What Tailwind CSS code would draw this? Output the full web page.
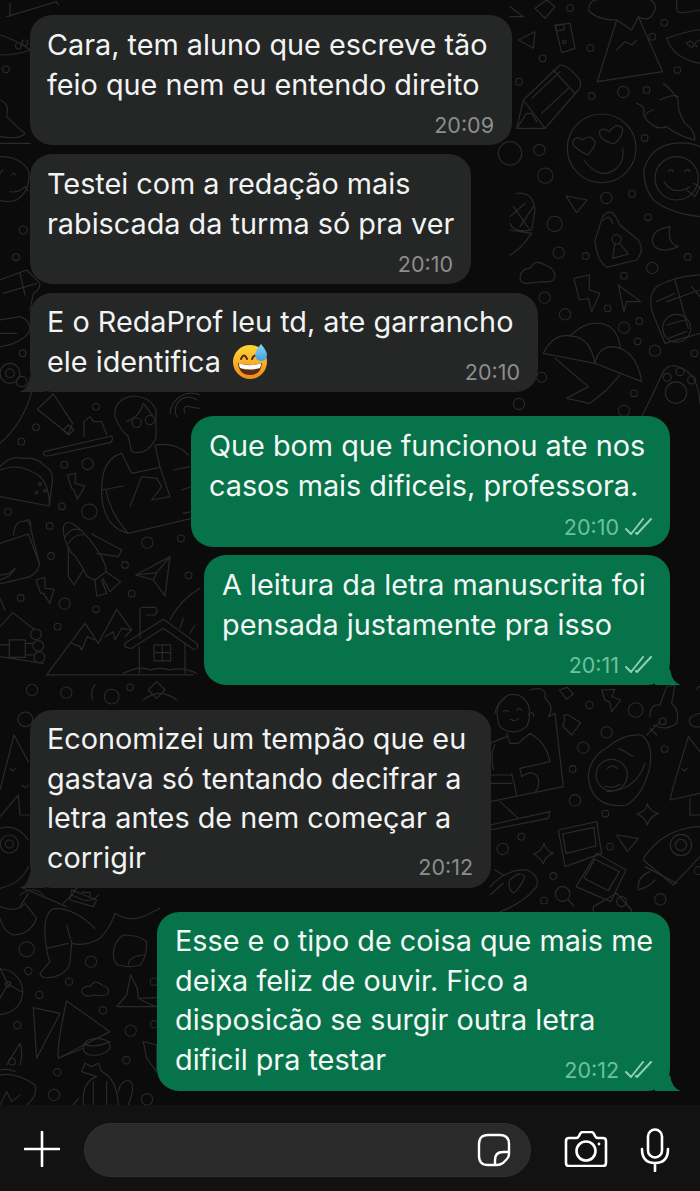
<!DOCTYPE html>
<html lang="en">
<head>
    <meta charset="UTF-8">
    <meta name="viewport" content="width=device-width, initial-scale=1.0">
    <title>Conversa</title>
    <script src="https://cdn.jsdelivr.net/npm/@tailwindcss/browser@4"></script>
</head>
<body class="bg-[#0b0b0b]">

<div class="relative w-[700px] h-[1191px] overflow-hidden bg-[#0b0b0b] font-['Inter',sans-serif] flex flex-col">

    <!-- doodle wallpaper, paths are in 3x crop coords -->
    <svg class="absolute inset-0" width="700" height="1191" viewBox="0 0 700 1191" fill="none" stroke="#2a2a2a" stroke-width="3.6" stroke-linecap="round" stroke-linejoin="round">
        <!-- middle left: person, taco, rocket, house -->
        <g transform="translate(0 380) scale(.3333)">
            <path d="M0 190Q70 130 95 35"/>
            <path d="M112 88L160 42L218 130L205 162L190 150Z"/><path d="M190 150L205 135L222 150L205 165Z"/>
            <path d="M132 215L335 168Q342 180 330 188L145 228Q125 228 132 215Z"/><path d="M252 170V125L270 110L280 125L305 125L320 165"/>
            <path d="M345 110Q340 60 395 48Q450 48 468 90L468 175Q440 230 395 215L385 170Q360 150 345 110Z"/><path d="M380 125Q420 110 430 70L460 110"/><circle cx="410" cy="128" r="14"/><circle cx="450" cy="120" r="14"/>
            <path d="M365 220L395 280L480 262L465 195Q530 185 565 225"/><path d="M365 220Q305 235 305 330Q305 440 385 460L575 415"/><path d="M305 330L370 318"/><path d="M390 380L425 290L470 295L485 320L455 360L510 350L480 262"/><path d="M318 330Q330 400 385 460"/><path d="M520 270L570 260M545 330L575 320M550 400L575 395"/>
            <path d="M510 100a65 65 0 0 1 90 -55M530 110a40 40 0 0 1 60 -50"/><path d="M555 100q-10 -25 15 -20q20 5 30 5"/>
            <path d="M0 260Q30 225 70 235Q110 230 130 255Q165 270 155 320L148 378L0 350"/><path d="M0 270Q60 245 120 290Q150 320 148 378"/>
            <circle cx="120" cy="312" r="4"/><circle cx="135" cy="332" r="4"/><circle cx="110" cy="338" r="4"/>
            <path d="M202 285L228 280L225 310L255 318L232 358L222 330L215 325Z"/>
            <path d="M108 600L135 592L135 625L162 628L150 670L130 640L122 640Z"/>
            <path d="M0 490L85 462L118 550Q118 575 90 590L0 612"/><path d="M80 420Q95 415 92 445L118 550"/><path d="M40 465Q45 420 70 425Q85 415 92 440"/><path d="M0 600Q35 590 45 565Q30 585 0 585"/>
            <path d="M190 450Q190 420 215 430Q250 450 285 500Q320 550 318 575L285 600L262 590Q225 520 215 520Q190 480 190 450Z"/><path d="M195 470Q215 440 240 450M205 490Q225 460 250 465"/><path d="M275 462L365 510L355 530L290 520"/><path d="M205 500L205 590L222 615L250 570"/><path d="M318 575L362 605L330 635L308 595M285 600L290 648L320 640L305 600"/>
            <path d="M408 585L510 530L495 648L460 600Z"/><path d="M408 585L470 578L510 530M470 578L460 600"/>
            <path d="M140 885L255 730L295 790L350 688L395 750L375 770"/><path d="M215 790L240 800L245 810L262 770L285 780"/><path d="M315 770L340 755L345 780L365 745L395 750"/>
            <path d="M140 885H580"/><path d="M375 790L490 718L590 790Q600 808 580 808L490 745L395 805Q370 805 375 790Z"/><path d="M420 775V690Q420 680 435 682H465Q478 690 465 705H440M418 800V880M555 790V880"/><rect x="462" y="795" width="50" height="48"/><path d="M487 795V843M462 818H512"/>
            <path d="M370 880Q420 855 450 870Q480 860 510 870Q550 860 590 880"/>
            <path d="M510 720Q540 660 600 625M540 745L550 715M570 760L585 735"/>
            <path d="M0 740L38 698L105 750M0 830L130 850"/><rect x="28" y="780" width="48" height="52"/><circle cx="108" cy="763" r="16"/><circle cx="115" cy="798" r="16"/><circle cx="118" cy="832" r="16"/><path d="M0 795H28M76 790H100M76 825H100"/>
            <path d="M0 655L15 690"/>
            <g stroke-width="3.2"><circle cx="108" cy="142" r="10"/><circle cx="64" cy="185" r="10"/><circle cx="288" cy="80" r="10"/><circle cx="193" cy="254" r="10"/><circle cx="263" cy="252" r="17"/><circle cx="186" cy="379" r="10"/><circle cx="268" cy="395" r="23"/><circle cx="24" cy="395" r="10"/><circle cx="149" cy="438" r="10"/><circle cx="442" cy="488" r="17"/><circle cx="543" cy="475" r="10"/><circle cx="153" cy="528" r="10"/><circle cx="375" cy="555" r="10"/><circle cx="566" cy="586" r="10"/><circle cx="395" cy="641" r="10"/><circle cx="62" cy="654" r="10"/><circle cx="194" cy="671" r="17"/><circle cx="288" cy="688" r="10"/><circle cx="173" cy="740" r="10"/><circle cx="96" cy="930" r="17"/><circle cx="199" cy="938" r="17"/><circle cx="335" cy="950" r="22"/><circle cx="390" cy="922" r="10"/></g>
            <path d="M445 930l25 -25l25 25l-25 25zM430 960Q480 920 530 960"/><path d="M278 960Q270 930 285 915"/>
        </g>

        <!-- left column between the bubbles -->
        <g transform="translate(0 680) scale(.3333)">
            <path d="M0 330L42 165L85 245"/><path d="M0 410L55 345L60 405H88"/><path d="M30 265l8 8l8 -8M65 315l10 8l10 -8"/>
            <path d="M0 445Q50 430 85 480M85 560Q65 610 0 625"/><circle cx="28" cy="492" r="27"/><circle cx="28" cy="492" r="12"/>
            <circle cx="76" cy="118" r="22"/><path d="M70 625L200 680M60 680L85 640"/><path d="M215 630L290 660L280 680L210 660Z"/>
        </g>

        <!-- top right: pencil, smileys, lock, umbrellas -->
        <g transform="translate(510 0) scale(.3333)">
            <path d="M20 385L40 300L150 195Q175 195 210 240Q215 260 205 270L105 385Z"/><path d="M40 300L105 385M130 210L195 280M65 295L150 215M95 340L175 265"/><path d="M20 385L50 340L65 340L80 365"/>
            <circle cx="275" cy="445" r="103"/><path d="M222 480Q270 545 320 505Q345 480 338 445"/>
            <path d="M232 465Q185 440 188 425Q200 405 218 420Q240 400 255 425Q258 440 232 465Z"/><path d="M312 432Q268 420 268 395Q280 380 298 395Q320 365 338 385Q340 410 312 432Z"/>
            <path d="M570 650Q480 640 430 600Q400 560 402 510Q420 440 490 430Q540 425 570 440"/><circle cx="500" cy="535" r="65"/><path d="M475 515q8 -12 15 0M525 515q8 -12 15 0M462 545Q490 590 540 560"/><path d="M530 570l25 20l15 -30l-20 -10"/>
            <path d="M262 245L320 60L365 90L385 50L458 215Z"/><path d="M320 60Q260 60 235 30Q240 0 260 0M385 50Q420 70 435 30Q440 10 420 0"/><path d="M320 150L345 125L365 135L380 120"/>
            <path d="M470 115Q560 85 570 90M470 115Q490 175 570 190"/><path d="M530 130q15 -15 22 5q-5 15 -22 -5M570 120q-20 5 -10 20"/>
            <path d="M380 310Q410 320 400 345Q430 395 470 380Q510 410 555 420Q555 390 525 370Q500 330 505 300Q490 275 460 250"/><path d="M450 300Q490 280 505 290M430 330q-20 5 -25 20"/>
            <path d="M0 50L40 50L0 20M75 25L110 0L135 20L105 55Z"/><path d="M25 120L75 95L70 145Z"/>
            <path d="M135 75L180 70L195 145L155 158Z"/><rect x="138" y="75" width="24" height="16" transform="rotate(-10 150 83)"/><circle cx="163" cy="125" r="5"/>
            <path d="M500 30Q500 45 570 30M500 0V30"/>
            <path d="M168 588L232 600L200 638Z"/>
            <path d="M255 722L278 650Q300 620 320 655L330 675L385 720Q405 750 380 780L290 802Q260 780 255 722Z"/><path d="M280 660Q300 640 308 672"/><circle cx="320" cy="718" r="14"/><path d="M315 730L308 775L355 762L328 730"/>
            <path d="M480 680Q420 690 428 730Q445 765 505 740Q470 730 480 680Z"/>
            <path d="M0 690L65 700Q30 750 0 765M20 580Q70 575 75 630L65 690Q10 700 0 670M10 620L60 690M0 650L45 610M30 680L70 620"/>
            <path d="M30 830Q35 805 60 805Q75 775 105 795Q135 805 135 830Q130 850 100 845L50 850Q30 850 30 830Z"/>
            <path d="M192 835L238 825L238 870L270 880L245 935L235 895L208 900Z"/>
            <path d="M325 855L392 905L350 905L342 935Z"/>
            <path d="M570 825Q490 830 440 860Q410 890 430 945L465 1030L570 1000"/><path d="M495 840L535 985M440 905L495 880M470 905L570 870M545 860L570 890"/><circle cx="500" cy="985" r="42"/><path d="M470 975L525 960M475 1015L530 995"/>
            <path d="M100 1060Q130 1000 180 1008Q240 1010 255 1090L100 1060Z"/><path d="M180 1008Q240 950 300 980Q330 1005 330 1045"/><path d="M255 1090Q265 1040 310 1040Q380 1050 395 1145L255 1090Z"/><path d="M135 1075L235 1160L170 1195L240 1210L290 1170L330 1125"/>
            <path d="M390 1260Q430 1180 460 1115Q480 1085 515 1105Q565 1125 570 1210"/><circle cx="498" cy="1178" r="32"/><circle cx="472" cy="1132" r="12"/><circle cx="510" cy="1115" r="12"/><circle cx="545" cy="1140" r="12"/>
            <circle cx="0" cy="460" r="35"/>
            <g stroke-width="3.2"><circle cx="180" cy="24" r="10"/><circle cx="463" cy="68" r="10"/><circle cx="427" cy="110" r="10"/><circle cx="241" cy="144" r="10"/><circle cx="98" cy="175" r="10"/><circle cx="502" cy="210" r="10"/><circle cx="27" cy="245" r="10"/><circle cx="245" cy="288" r="10"/><circle cx="340" cy="276" r="17"/><circle cx="410" cy="270" r="10"/><circle cx="404" cy="414" r="10"/><circle cx="88" cy="450" r="17"/><circle cx="106" cy="527" r="23"/><circle cx="289" cy="594" r="17"/><circle cx="366" cy="581" r="10"/><circle cx="134" cy="672" r="23"/><circle cx="414" cy="652" r="10"/><circle cx="146" cy="758" r="17"/><circle cx="227" cy="768" r="10"/><circle cx="533" cy="771" r="10"/><circle cx="427" cy="804" r="17"/><circle cx="342" cy="827" r="10"/><circle cx="104" cy="893" r="17"/><circle cx="293" cy="925" r="10"/><circle cx="165" cy="943" r="17"/><circle cx="388" cy="963" r="10"/><circle cx="342" cy="983" r="17"/><circle cx="383" cy="1024" r="10"/><circle cx="435" cy="1052" r="17"/><circle cx="553" cy="1060" r="10"/><circle cx="95" cy="1132" r="15"/><circle cx="372" cy="1180" r="10"/><circle cx="27" cy="1212" r="17"/><circle cx="342" cy="1232" r="17"/></g>
        </g>

        <!-- right middle: laptop person, avocado, tree, photos, rocket -->
        <g transform="translate(490 680) scale(.3333)">
            <path d="M25 125Q10 70 55 45Q95 35 115 75Q125 110 110 140Q80 165 45 150Q25 140 25 125Z"/><path d="M15 100Q20 70 45 55M115 105a8 8 0 1 1 15 5"/><path d="M40 95q8 -8 15 0M80 90q8 -8 15 0M60 118q15 8 25 -2"/>
            <path d="M50 160L60 190L85 190L120 160Q170 190 180 245L90 265L95 290M0 190L50 170M10 270Q0 220 15 195"/>
            <path d="M120 30Q170 15 165 55Q195 80 175 110L195 100L220 320L0 365"/><path d="M65 280L80 345M95 290Q130 265 145 295Q150 320 135 338"/><path d="M0 285H65M0 310H65"/>
            <path d="M30 365L85 415M0 435L180 395L175 415L0 450"/>
            <path d="M208 30L232 22L250 42L230 58Z"/><path d="M225 118Q215 100 235 105L272 128L245 165L218 138L225 118Z"/>
            <path d="M335 30L375 28L365 50L392 60L365 95L358 65L345 60Z"/>
            <path d="M295 285Q300 230 355 200Q400 160 455 165Q490 190 480 260Q460 345 410 375Q340 385 310 340Q295 315 295 285Z"/><path d="M350 335Q440 330 465 250M385 205l20 10M405 215l25 15"/><circle cx="365" cy="285" r="47"/><path d="M352 265q15 -15 30 0M345 318q25 10 45 -5"/>
            <path d="M470 165L510 125M480 145L500 165"/><circle cx="518" cy="124" r="10"/><path d="M480 110Q480 70 510 75L530 20L555 15L545 70Q570 90 560 130Q530 155 490 135"/>
            <path d="M550 320L595 170L630 215M550 320L540 360L630 340M575 265l8 8l8 -8"/><path d="M600 355V405H630"/><path d="M630 100Q590 110 600 130Q610 145 630 140"/>
            <path d="M440 402Q470 395 472 370Q478 395 505 400Q478 410 472 435Q465 410 440 402Z"/>
            <path d="M380 465L445 475L412 515Z"/><path d="M130 522Q155 515 162 490Q170 515 190 520Q165 528 160 552Q150 530 130 522Z"/>
            <path d="M205 450L320 425L335 520L225 560Z"/><path d="M218 462L312 442L318 498L228 520Z"/>
            <path d="M320 520L408 570L362 665L258 620Z"/><path d="M315 538L388 575L355 632L282 595Z"/>
            <path d="M310 720V680L380 640L425 690V720"/><circle cx="395" cy="665" r="15"/>
            <path d="M630 440Q570 440 510 480Q465 520 460 540L550 615L630 530"/><circle cx="573" cy="495" r="32"/><circle cx="573" cy="495" r="17"/><path d="M465 560L560 610M480 575Q440 590 445 630Q480 620 495 600"/>
            <path d="M0 620Q50 565 110 570Q150 585 140 620Q100 670 30 695M0 645L40 610M60 600Q90 570 105 590Q90 625 70 640Q50 620 60 600M15 570L40 585"/>
            <circle cx="218" cy="642" r="22"/><path d="M235 660L252 678"/>
            <g stroke-width="3.2"><circle cx="298" cy="75" r="11"/><circle cx="437" cy="90" r="22"/><circle cx="350" cy="157" r="17"/><circle cx="280" cy="203" r="17"/><circle cx="248" cy="267" r="10"/><circle cx="524" cy="207" r="10"/><circle cx="255" cy="361" r="17"/><circle cx="346" cy="401" r="10"/><circle cx="94" cy="470" r="10"/><circle cx="38" cy="507" r="17"/><circle cx="360" cy="500" r="10"/><circle cx="190" cy="588" r="10"/><circle cx="162" cy="662" r="10"/><circle cx="511" cy="658" r="17"/><circle cx="625" cy="572" r="12"/></g>
            <path d="M620 28a12 12 0 1 1 15 15"/>
        </g>

        <!-- bottom left: legs, ball, nacho, cactus, lamp -->
        <g transform="translate(0 885) scale(.3333)">
            <path d="M0 65Q50 85 75 55L110 100Q90 150 40 150Q10 140 0 100M75 55L110 100"/>
            <path d="M60 30Q100 0 130 30M190 55L215 30M285 130Q225 70 165 70Q130 80 135 150Q140 210 150 230L120 265Q125 285 165 275Q200 265 210 235L215 170"/><path d="M215 175Q260 185 300 160Q330 130 345 85Q390 115 440 90L480 70"/><path d="M140 190L205 175M200 120L215 175"/>
            <path d="M220 20L240 0M295 30Q280 50 250 45L215 30L230 10M245 22h25v12"/>
            <path d="M340 210Q340 170 370 150Q420 150 440 170Q440 220 420 240Q385 250 355 240Q340 230 340 210Z"/><path d="M385 240Q385 215 430 210"/>
            <path d="M245 320Q250 300 270 305Q285 280 305 300Q330 305 325 325Q315 335 285 330Q255 340 245 320Z"/>
            <path d="M350 365L380 330L392 270L412 310L415 340L470 338M415 340Q450 360 470 365L350 365"/>
            <circle cx="0" cy="320" r="68"/><circle cx="24" cy="298" r="8"/><path d="M24 298L0 250M24 298L65 320M24 298L0 340"/>
            <path d="M100 368L180 385L110 520Z"/><path d="M200 348L330 440L175 520Q170 480 200 348Z"/><path d="M250 490Q250 460 295 460Q335 465 330 490Q310 515 270 510Q250 505 250 490Z"/><path d="M250 478Q290 490 330 470M175 520L250 490"/>
            <path d="M20 540Q45 500 60 475Q70 510 60 540"/><circle cx="36" cy="530" r="10"/><path d="M0 555Q25 550 45 560M0 570Q50 560 105 600Q115 630 80 660M0 660L20 620L35 650L60 630"/>
            <path d="M250 660Q245 590 290 575L245 560L255 535L275 545L295 535L305 560Q350 580 355 660M280 590V660M320 590V660"/>
            <path d="M355 620Q360 590 385 585Q405 595 395 630L385 660M220 660L235 640"/>
            <g stroke-width="3.2"><circle cx="80" cy="193" r="23"/><circle cx="273" cy="230" r="17"/><circle cx="85" cy="258" r="11"/><circle cx="207" cy="290" r="11"/><circle cx="118" cy="330" r="11"/><circle cx="462" cy="290" r="11"/><circle cx="309" cy="376" r="11"/><circle cx="52" cy="421" r="11"/><circle cx="392" cy="437" r="17"/><circle cx="462" cy="418" r="11"/><circle cx="379" cy="526" r="11"/><circle cx="172" cy="562" r="11"/><circle cx="162" cy="630" r="17"/><circle cx="441" cy="643" r="17"/></g>
            <path d="M430 470L470 480V560L440 520Z"/>
        </g>

        <!-- left margin at the top -->
        <g transform="scale(.3333)">
            <path d="M20 50L170 5L175 15M30 10V50"/><path d="M0 105Q50 120 90 150M0 165Q50 165 92 150M50 130a8 10 0 1 0 10 0M70 120a8 10 0 1 0 10 0"/>
            <path d="M0 300Q30 310 20 350Q50 380 75 400Q60 420 0 410"/>
            <path d="M90 430H0"/><path d="M0 470Q60 470 85 510Q95 570 50 600Q20 610 0 600"/><path d="M0 520l8 -10M35 525q6 -10 12 0M30 575q25 5 45 -15l10 12"/>
            <circle cx="18" cy="208" r="10"/><circle cx="70" cy="690" r="12"/><circle cx="48" cy="772" r="10"/>
            <path d="M0 840L80 810L120 850Q120 870 100 880L90 930M10 880L110 850M60 820L75 885M0 960L60 950Q90 960 90 990Q70 1030 0 1040M0 1000H50"/>
            <circle cx="30" cy="1120" r="30"/><circle cx="30" cy="1120" r="13"/><circle cx="68" cy="1060" r="10"/><circle cx="65" cy="1145" r="16"/>
        </g>
    </svg>

    <!-- messages -->
    <div class="relative flex-1 flex flex-col pt-[15px]">
        <div class="relative self-start ml-[30px] w-[482px] h-[130px] rounded-[22px] bg-[#252626] pl-[17px] pt-[10px] text-[28.8px] leading-[39.5px] text-[#f2f3f3]">
            Cara, tem aluno que escreve tão<br>feio que nem eu entendo direito
            <span class="absolute right-[18px] bottom-[7px] text-[21.5px] leading-[26px] text-[#8c8d8d]">20:09</span>
        </div>

        <div class="relative self-start ml-[30px] mt-[9px] w-[441px] h-[130px] rounded-[22px] bg-[#252626] pl-[17px] pt-[10px] text-[28.8px] leading-[39.5px] text-[#f2f3f3]">
            Testei com a redação mais<br>rabiscada da turma só pra ver
            <span class="absolute right-[18px] bottom-[7px] text-[21.5px] leading-[26px] text-[#8c8d8d]">20:10</span>
        </div>

        <div class="relative self-start ml-[30px] mt-[9px] w-[508px] h-[99px] rounded-[22px] bg-[#252626] pl-[17px] pt-[9px] text-[28.8px] leading-[39.5px] text-[#f2f3f3]">
            <svg class="absolute -left-[11px] bottom-0" width="26" height="16" viewBox="0 0 26 16"><path d="M0 16Q9 14 11 0L26 8V16Z" fill="#252626"/></svg>
            <span class="relative">E o RedaProf leu td, ate garrancho<br>ele identifica
                <svg class="inline-block align-[-7px] ml-[3px]" width="36" height="36" viewBox="0 0 36 36">
                    <defs>
                        <linearGradient id="face" x1="0" y1="0" x2="0" y2="1"><stop offset="0" stop-color="#fdd835"/><stop offset="1" stop-color="#f08a1c"/></linearGradient>
                        <linearGradient id="drop" x1="0" y1="0" x2="0" y2="1"><stop offset="0" stop-color="#8fd4f5"/><stop offset="1" stop-color="#3a9fe0"/></linearGradient>
                    </defs>
                    <circle cx="18" cy="19" r="17" fill="url(#face)"/>
                    <path d="M6 20Q18 24 30 20Q29 32 18 32Q7 32 6 20Z" fill="#5b2a12"/>
                    <path d="M7 20.3Q18 24 29 20.3Q29 24 28 25Q18 28 8 25Q7 23 7 20.3Z" fill="#fff"/>
                    <path d="M9 16Q12 9 15 16M20 16Q23 9 27 16" fill="none" stroke="#5b2a12" stroke-width="2" stroke-linecap="round"/>
                    <path d="M29 1Q35 8 35 12A6 6 0 0 1 23 12Q23 8 29 1Z" fill="url(#drop)"/>
                </svg>
            </span>
            <span class="absolute right-[18px] bottom-[7px] text-[21.5px] leading-[26px] text-[#8c8d8d]">20:10</span>
        </div>

        <div class="relative self-end mr-[30px] mt-[24px] w-[479px] h-[131px] rounded-[22px] bg-[#07734a] pl-[18px] pt-[10px] text-[28.8px] leading-[39.5px] text-[#f4f8f6]">
            Que bom que funcionou ate nos<br>casos mais dificeis, professora.
            <span class="absolute right-[17px] bottom-[7px] flex items-center gap-[6px] text-[21.5px] leading-[26px] text-[#6cc19c]">20:10
                <svg width="28" height="18" viewBox="0 0 28 18" fill="none" stroke="#8fd0b2" stroke-width="2" stroke-linecap="round" stroke-linejoin="round"><path d="M1 11L6 16L18 1M11 15L12 16L26 1"/></svg>
            </span>
        </div>

        <div class="relative self-end mr-[30px] mt-[8px] w-[466px] h-[130px] rounded-[22px] bg-[#07734a] pl-[18px] pt-[10px] text-[28.8px] leading-[39.5px] text-[#f4f8f6]">
            <svg class="absolute -right-[11px] bottom-0" width="26" height="16" viewBox="0 0 26 16"><path d="M26 16Q17 14 15 0L0 8V16Z" fill="#07734a"/></svg>
            A leitura da letra manuscrita foi<br>pensada justamente pra isso
            <span class="absolute right-[17px] bottom-[7px] flex items-center gap-[6px] text-[21.5px] leading-[26px] text-[#6cc19c]">20:11
                <svg width="28" height="18" viewBox="0 0 28 18" fill="none" stroke="#8fd0b2" stroke-width="2" stroke-linecap="round" stroke-linejoin="round"><path d="M1 11L6 16L18 1M11 15L12 16L26 1"/></svg>
            </span>
        </div>

        <div class="relative self-start ml-[30px] mt-[25px] w-[461px] h-[178px] rounded-[22px] bg-[#252626] pl-[17px] pt-[9px] text-[28.8px] leading-[39.5px] text-[#f2f3f3]">
            <svg class="absolute -left-[11px] bottom-0" width="26" height="16" viewBox="0 0 26 16"><path d="M0 16Q9 14 11 0L26 8V16Z" fill="#252626"/></svg>
            <span class="relative">Economizei um tempão que eu<br>gastava só tentando decifrar a<br>letra antes de nem começar a<br>corrigir</span>
            <span class="absolute right-[18px] bottom-[8px] text-[21.5px] leading-[26px] text-[#8c8d8d]">20:12</span>
        </div>

        <div class="relative self-end mr-[30px] mt-[24px] w-[513px] h-[179px] rounded-[22px] bg-[#07734a] pl-[18px] pt-[9px] text-[28.8px] leading-[39.5px] text-[#f4f8f6]">
            <svg class="absolute -right-[11px] bottom-0" width="26" height="16" viewBox="0 0 26 16"><path d="M26 16Q17 14 15 0L0 8V16Z" fill="#07734a"/></svg>
            Esse e o tipo de coisa que mais me<br>deixa feliz de ouvir. Fico a<br>disposicão se surgir outra letra<br>dificil pra testar
            <span class="absolute right-[17px] bottom-[8px] flex items-center gap-[6px] text-[21.5px] leading-[26px] text-[#6cc19c]">20:12
                <svg width="28" height="18" viewBox="0 0 28 18" fill="none" stroke="#8fd0b2" stroke-width="2" stroke-linecap="round" stroke-linejoin="round"><path d="M1 11L6 16L18 1M11 15L12 16L26 1"/></svg>
            </span>
        </div>
    </div>

    <!-- input bar -->
    <div class="relative h-[86px] bg-[#121212] flex items-start pt-[18px]">
        <svg class="ml-[24px] mt-[8px]" width="36" height="36" viewBox="0 0 36 36" fill="none" stroke="#fff" stroke-width="2.6" stroke-linecap="round"><path d="M18 1V35M1 18H35"/></svg>
        <div class="ml-[24px] w-[447px] h-[54px] rounded-[27px] bg-[#2a2a2a] border border-[#323232] flex items-center justify-end pr-[19px]">
            <svg width="34" height="34" viewBox="0 0 34 34" fill="none" stroke="#fff" stroke-width="2.4" stroke-linejoin="round"><path d="M11 2H23Q32 2 32 11V21Q32 24 29 27L26 30Q23 32 20 32H11Q2 32 2 23V11Q2 2 11 2Z"/><path d="M32 19H26Q18 19 18 27V32"/></svg>
        </div>
        <svg class="ml-[33px] mt-[8px]" width="44" height="36" viewBox="0 0 44 36" fill="none" stroke="#fff" stroke-width="2.6" stroke-linejoin="round"><path d="M5 7H12Q14 7 15 5L16 3Q17 1 19 1H27Q29 1 30 3L31 5Q32 7 34 7H39Q42 7 42 10V32Q42 35 39 35H5Q2 35 2 32V10Q2 7 5 7Z"/><circle cx="22" cy="20" r="9.5"/><circle cx="35" cy="13" r="1.4" fill="#fff" stroke="none"/></svg>
        <svg class="ml-[32px] mt-[5px]" width="30" height="44" viewBox="0 0 30 44" fill="none" stroke="#fff" stroke-width="2.6" stroke-linecap="round"><rect x="8" y="1.5" width="14" height="28" rx="7"/><path d="M2 21Q2 35 15 35Q28 35 28 21M15 35V43"/></svg>
    </div>
</div>

</body>
</html>
